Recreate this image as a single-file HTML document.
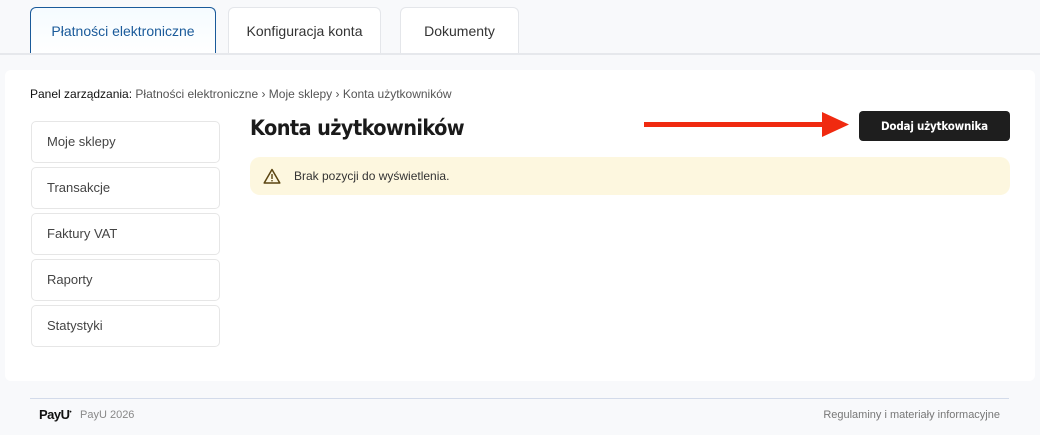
<!DOCTYPE html>
<html><head><meta charset="utf-8"><style>
*{box-sizing:border-box;margin:0;padding:0}
body{width:1040px;height:435px;background:#f8f9fb;font-family:"Liberation Sans",sans-serif;position:relative;overflow:hidden;color:#222}
.tab{position:absolute;top:7px;height:47px;background:#fff;border:1px solid #e4e6ea;border-bottom:none;border-radius:6px 6px 0 0;font-size:14px;color:#333;text-align:center;line-height:46px}
.tab.a{border-color:#1a5a9a;color:#1a5a9a;background:linear-gradient(#f5fbff,#fff)}
.hl{position:absolute;top:53px;left:0;width:1040px;height:2px;background:#e6e8ec}
.panel{position:absolute;left:5px;top:70px;width:1030px;height:311px;background:#fff;border-radius:6px}
.bc{position:absolute;left:30px;top:87px;font-size:12px;color:#555}
.bc b{font-weight:normal;color:#111}
.side{position:absolute;left:31px;width:189px;height:42px;border:1px solid #e6e6e6;border-radius:5px;font-size:13px;color:#444;padding-left:15px;line-height:40px;background:#fff}
h1{position:absolute;left:250px;top:116px;font-family:"DejaVu Sans Condensed","DejaVu Sans",sans-serif;font-size:21.5px;font-weight:bold;color:#1a1a1a;letter-spacing:-0.6px}
.btn{position:absolute;left:859px;top:111px;width:151px;height:30px;background:#1e1e1e;border-radius:4px;color:#fff;font-family:"DejaVu Sans Condensed","DejaVu Sans",sans-serif;font-weight:bold;font-size:11.5px;letter-spacing:-0.2px;text-align:center;line-height:30px}
.alert{position:absolute;left:250px;top:157px;width:760px;height:38px;background:#fdf7df;border-radius:10px;font-size:12px;color:#333}
.alert span{position:absolute;left:44px;top:12px}
.fl{position:absolute;left:30px;top:398px;width:979px;height:1px;background:#d3dbea}
.ft{position:absolute;top:409px;font-size:11px;color:#888}
</style></head><body>
<div class="tab a" style="left:30px;width:186px">Płatności elektroniczne</div>
<div class="tab" style="left:228px;width:153px">Konfiguracja konta</div>
<div class="tab" style="left:400px;width:119px">Dokumenty</div>
<div class="hl"></div>
<div class="panel"></div>
<div class="bc"><b>Panel zarządzania:</b> Płatności elektroniczne › Moje sklepy › Konta użytkowników</div>
<div class="side" style="top:121px">Moje sklepy</div>
<div class="side" style="top:167px">Transakcje</div>
<div class="side" style="top:213px">Faktury VAT</div>
<div class="side" style="top:259px">Raporty</div>
<div class="side" style="top:305px">Statystyki</div>
<h1>Konta użytkowników</h1>
<svg style="position:absolute;left:644px;top:111px" width="206" height="27"><rect x="0" y="11" width="180" height="5" fill="#f02a10"/><polygon points="178,1 205,13.5 178,26" fill="#f02a10"/></svg>
<div class="btn">Dodaj użytkownika</div>
<div class="alert"><svg style="position:absolute;left:13px;top:11px" width="18" height="16" viewBox="0 0 18 16"><path d="M9 1.5 L16.8 15 H1.2 Z" fill="none" stroke="#5a4410" stroke-width="1.5" stroke-linejoin="round"/><rect x="8.3" y="6" width="1.4" height="5" fill="#5a4410"/><rect x="8.3" y="12" width="1.4" height="1.4" fill="#5a4410"/></svg><span>Brak pozycji do wyświetlenia.</span></div>
<div class="fl"></div>
<div class="ft" style="left:39px;color:#111;font-size:13px;font-weight:bold;top:407px;letter-spacing:-0.5px">PayU<sup style="font-size:6px">•</sup></div>
<div class="ft" style="left:80px">PayU 2026</div>
<div class="ft" style="right:40px;color:#777">Regulaminy i materiały informacyjne</div>
</body></html>
